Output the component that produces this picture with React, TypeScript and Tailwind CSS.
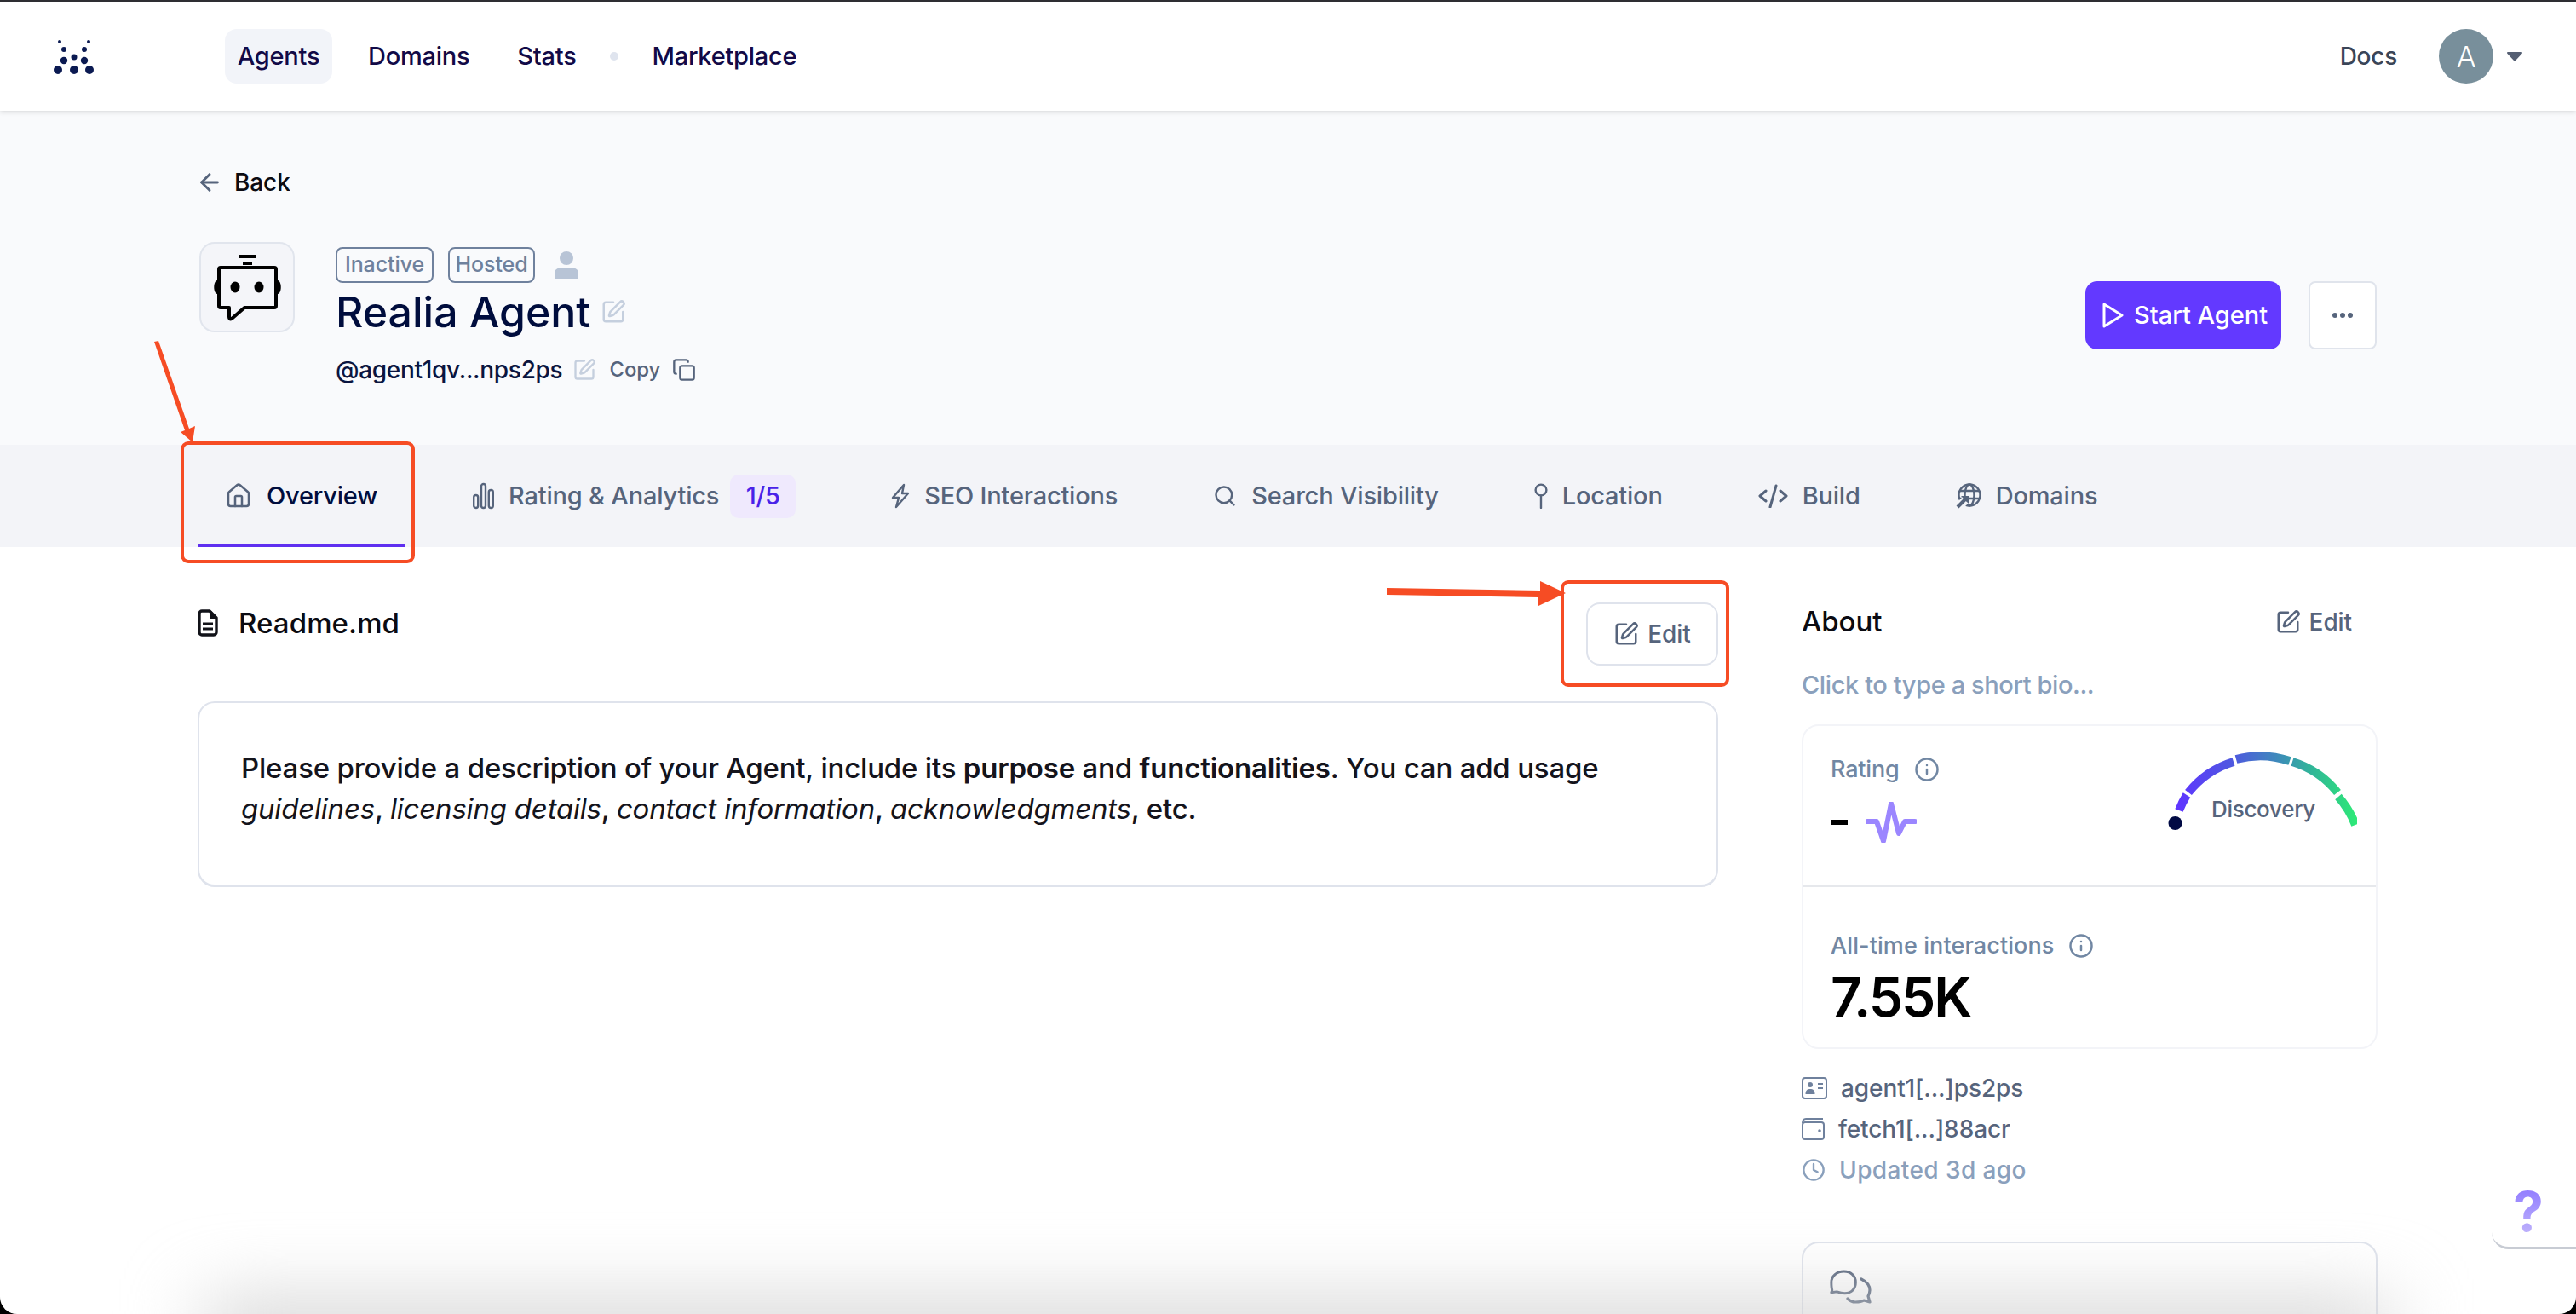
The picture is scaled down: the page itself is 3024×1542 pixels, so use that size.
import { Search, SquarePen, Copy, Info, Clock, ArrowLeft, House } from "lucide-react";

function Logo() {
  const dots = [
    [70, 48, 2], [104, 48, 2], [75, 57, 3], [99, 57, 3], [87, 66, 3.5],
    [75, 70, 4.2], [99, 70, 4.2], [68, 81, 5], [87, 81, 5], [105, 81, 5],
  ];
  return (
    <svg viewBox="60 42 54 46" className="w-[54px] h-[46px]" fill="#0b1a52">
      {dots.map(([x, y, r], i) => <circle key={i} cx={x} cy={y} r={r} />)}
    </svg>
  );
}

function Robot() {
  return (
    <svg viewBox="-3 0 90 80" className="w-[90px] h-[80px]" fill="none">
      <rect x="32" y="2" width="20" height="4" fill="#000" />
      <rect x="37" y="10" width="11" height="4" fill="#000" />
      <path d="M11 17h63a2 2 0 0 1 2 2v43a2 2 0 0 1-2 2H39L24 77c-2 1-3 0-3-2V64H11a2 2 0 0 1-2-2V19a2 2 0 0 1 2-2Z" stroke="#000" strokeWidth="4" strokeLinejoin="round" />
      <ellipse cx="28" cy="40" rx="5.5" ry="6.5" fill="#000" />
      <ellipse cx="56" cy="40" rx="5.5" ry="6.5" fill="#000" />
      <path d="M7 32c-5 1-5 15 0 16Z" fill="#000" />
      <path d="M78 32c5 1 5 15 0 16Z" fill="#000" />
    </svg>
  );
}

function Person() {
  return (
    <svg viewBox="0 0 28 32" className="w-[28px] h-[32px]" fill="#b8c4d6">
      <ellipse cx="14" cy="8" rx="8" ry="8" />
      <path d="M0 32v-6c0-5 4-7 8-7h12c4 0 8 2 8 7v6Z" />
    </svg>
  );
}

function Bars() {
  return (
    <svg viewBox="0 0 25 32" className="w-[25px] h-[32px]" fill="none" stroke="#56647c" strokeWidth="2.4">
      <rect x="1.2" y="15" width="5" height="15" rx="2.5" />
      <rect x="10" y="2" width="5" height="28" rx="2.5" />
      <rect x="18.8" y="9" width="5" height="21" rx="2.5" />
    </svg>
  );
}

function Bolt() {
  return (
    <svg viewBox="0 0 22 30" className="w-[22px] h-[30px]" fill="none" stroke="#56647c" strokeWidth="2.4" strokeLinejoin="round">
      <path d="M15 2 2 17h7L6 28l14-16h-7l2-10Z" />
    </svg>
  );
}

function Pin() {
  return (
    <svg viewBox="0 0 16 30" className="w-[16px] h-[30px]" fill="none" stroke="#56647c" strokeWidth="2.4" strokeLinecap="round">
      <circle cx="8" cy="8" r="6.4" />
      <path d="M8 14.4V29" />
    </svg>
  );
}

function BuildIcon() {
  return (
    <svg viewBox="0 0 35 28" className="w-[35px] h-[28px]" fill="none" stroke="#56647c" strokeWidth="3" strokeLinecap="round" strokeLinejoin="round">
      <path d="M9 8 2 14l7 6M26 8l7 6-7 6M21 2l-7 25" />
    </svg>
  );
}

function DomainIcon() {
  return (
    <svg viewBox="0 0 30 30" className="w-[30px] h-[30px]" fill="none" stroke="#56647c" strokeWidth="2.4">
      <circle cx="16" cy="14" r="12.5" />
      <ellipse cx="16" cy="14" rx="5.500" ry="12.5" />
      <path d="M4 9h24M4 18h24" />
      <path d="M2 29 11 20" stroke="#f3f4f8" strokeWidth="10" />
      <path d="M2 28 11 19" strokeWidth="4" />
      <path d="M6 15h10v10Z" fill="#56647c" stroke="none" />
    </svg>
  );
}

function ReadmeIcon() {
  return (
    <svg viewBox="0 0 24 32" className="w-[24px] h-[32px]" fill="none">
      <path d="M5 2h9l8 8v17a3 3 0 0 1-3 3H5a3 3 0 0 1-3-3V5a3 3 0 0 1 3-3Z" stroke="#111218" strokeWidth="3.4" strokeLinejoin="round" />
      <path d="M14 2h2l6 7v2h-8Z" fill="#111218" />
      <path d="M6 17h12M6 23h12" stroke="#111218" strokeWidth="3" />
    </svg>
  );
}

function PlayIcon() {
  return (
    <svg viewBox="0 0 26 30" className="w-[26px] h-[30px]" fill="none" stroke="#fff" strokeWidth="3" strokeLinejoin="round">
      <path d="M3 2v26l21-13Z" />
    </svg>
  );
}

function IdCard() {
  return (
    <svg viewBox="0 0 30 26" className="w-[30px] h-[26px]" fill="none">
      <rect x="1" y="1" width="28" height="24" rx="3" stroke="#6f819d" strokeWidth="2" />
      <circle cx="10" cy="9" r="3" fill="#6f819d" />
      <path d="M4.500 20c0-5 2.500-6 5.500-6s5.500 1 5.500 6Z" fill="#6f819d" />
      <path d="M19 8h6M19 13h6" stroke="#6f819d" strokeWidth="2" />
    </svg>
  );
}

function WalletIcon() {
  return (
    <svg viewBox="0 0 27 26" className="w-[27px] h-[26px]" fill="none" stroke="#6f819d" strokeWidth="2">
      <rect x="1" y="5" width="25" height="20" rx="3" />
      <path d="M1 6c0-3 1-5 4-5h20" />
      <circle cx="21" cy="15" r="0.8" fill="#6f819d" />
    </svg>
  );
}

function Chats() {
  return (
    <svg viewBox="0 0 50 40" className="w-[50px] h-[40px]" fill="none" stroke="#56647c" strokeWidth="3.2" strokeLinejoin="round" strokeLinecap="round">
      <path d="M3 25 2 28l7-1c3 1 6 2 10 2 9 0 14-6 14-14S27 1 18 1 2 7 2 15c0 4 0 7 1 10Z" transform="translate(0 1) scale(.92 .92)" />
      <path d="M37 11c6 3 10 7 10 13 0 3-1 5-2 7l2 7-7-2c-3 2-7 2-10 2-4 0-7-2-9-4" />
    </svg>
  );
}

function Gauge() {
  return (
    <div className="relative w-[222px] h-[96px]">
      <svg viewBox="0 0 222 96" className="w-[222px] h-[96px]" fill="none">
        <defs>
          <linearGradient id="g" gradientUnits="userSpaceOnUse" x1="13" y1="0" x2="220" y2="0">
            <stop offset="0" stopColor="#5f36ff" />
            <stop offset="0.3" stopColor="#4f58e0" />
            <stop offset="0.55" stopColor="#3e88bc" />
            <stop offset="0.75" stopColor="#30b598" />
            <stop offset="1" stopColor="#2ee878" />
          </linearGradient>
        </defs>
        <g stroke="url(#g)" strokeWidth="10">
          <path d="M13 71A108 108 0 0 1 22 53" />
          <path d="M24 50A108 108 0 0 1 77 14" />
          <path d="M80 11A108 108 0 0 1 143 13" />
          <path d="M146 14A108 108 0 0 1 199 50" />
          <path d="M200 55A108 108 0 0 1 220 88" />
        </g>
        <circle cx="8.500" cy="86" r="8" fill="#010a44" />
      </svg>
      <span className="absolute left-[51px] top-[57px] text-[26px] leading-[26px] tracking-[-0.3px] text-[#56647c]">Discovery</span>
    </div>
  );
}

function Pulse() {
  return (
    <svg viewBox="0 0 60 48" className="w-[60px] h-[48px]" fill="none" stroke="#9b86ff" strokeWidth="6" strokeLinecap="round" strokeLinejoin="round">
      <path d="M2 23h11l8 23 9-44 9 35 7-14h12" />
    </svg>
  );
}

function Tab({ icon, label, active, children }: { icon: React.ReactNode; label: string; active?: boolean; children?: React.ReactNode }) {
  return (
    <div className={`relative h-[120px] px-[32px] flex items-center gap-[17px] text-[29px] tracking-[-0.2px] whitespace-nowrap ${active ? "text-[#000d3d]" : "text-[#56647c]"}`}>
      {icon}
      <span>{label}</span>
      {children}
      {active && <div className="absolute left-0 right-0 bottom-0 h-[4px] bg-[#5f2ff0]" />}
    </div>
  );
}

function Annotations() {
  return (
    <svg viewBox="0 0 3024 1542" className="absolute left-0 top-0 w-[3024px] h-[1542px] pointer-events-none" fill="none">
      <rect x="214" y="520" width="271" height="139" rx="7" stroke="#f64c24" strokeWidth="4" />
      <rect x="1834" y="683" width="194" height="121" rx="7" stroke="#f64c24" strokeWidth="4" />
      <path d="M181 401 186 400 222 503 229 500 226 519 212 507 217 505Z" fill="#f64c24" />
      <path d="M1628 690 1808 693V682L1838 696 1806 711V701L1628 698Z" fill="#f64c24" />
    </svg>
  );
}

export default function App() {
  return (
    <div className="relative w-[3024px] h-[1542px] bg-black overflow-hidden font-['Inter',sans-serif] font-[450] tracking-[-0.1px]">
      <div className="relative h-full rounded-b-[20px] overflow-hidden bg-white flex flex-col">
        <header className="relative z-10 h-[130px] shrink-0 border-t-2 border-[#2e2e33] bg-white shadow-[0_2px_5px_rgba(0,0,0,0.12)] flex items-center pl-[60px] pr-[63px] text-[29px] tracking-[-0.25px] text-[#120a47]">
          <Logo />
          <nav className="ml-[150px] flex items-center">
            <div className="w-[126px] h-[64px] rounded-[14px] bg-[#f2f4f9] flex items-center justify-center">Agents</div>
            <span className="ml-[42px]">Domains</span>
            <span className="ml-[56px]">Stats</span>
            <span className="ml-[39px] w-[10px] h-[10px] rounded-full bg-[#dfe4ee]" />
            <span className="ml-[40px]">Marketplace</span>
          </nav>
          <div className="ml-auto flex items-center">
            <span className="text-[#3a4558] text-[28px]">Docs</span>
            <div className="ml-[49px] w-[64px] h-[64px] rounded-full bg-[#788f9b] text-white text-[34px] font-light flex items-center justify-center">A</div>
            <svg viewBox="0 0 18 11" className="ml-[16px] w-[18px] h-[11px]" fill="#555f73"><path d="M1 0h16a1 1 0 0 1 .7 1.700L10 10a1.500 1.500 0 0 1-2 0L.3 1.700A1 1 0 0 1 1 0Z" /></svg>
          </div>
        </header>

        <section className="h-[392px] shrink-0 bg-[#f9fafc] pl-[232px] pr-[234px] pt-[68px]">
          <div className="flex items-center gap-[12px] h-[32px] text-[28px] text-[#0b0b12]">
            <ArrowLeft className="-ml-[3px] w-[34px] h-[32px] text-[#56647c]" strokeWidth={2.2} />
            <span>Back</span>
          </div>
          <div className="mt-[54px] flex items-start justify-between">
            <div className="flex items-start">
              <div className="ml-[2px] w-[112px] h-[106px] rounded-[18px] border-2 border-[#e1e5ed] bg-[#f4f5f9] flex items-center justify-center">
                <Robot />
              </div>
              <div className="ml-[48px] pt-[6px]">
                <div className="flex items-center h-[42px]">
                  <span className="h-[42px] w-[115px] rounded-[8px] border-2 border-[#6f819d] text-[#6f819d] text-[25px] flex items-center justify-center">Inactive</span>
                  <span className="ml-[17px] h-[42px] w-[102px] rounded-[8px] border-2 border-[#6f819d] text-[#6f819d] text-[25px] flex items-center justify-center">Hosted</span>
                  <span className="ml-[23px]"><Person /></span>
                </div>
                <div className="mt-[6px] flex items-center h-[56px]">
                  <span className="text-[50px] leading-[56px] font-medium tracking-[0px] text-[#000d3d]">Realia Agent</span>
                  <SquarePen className="ml-[12px] w-[30px] h-[30px] text-[#c5cfde]" strokeWidth={2} />
                </div>
                <div className="mt-[24px] flex items-center h-[32px]">
                  <span className="text-[28px] tracking-[-0.3px] text-[#0a1540]">@agent1qv...nps2ps</span>
                  <SquarePen className="ml-[12px] w-[28px] h-[28px] text-[#c5cfde]" strokeWidth={2} />
                  <span className="ml-[15px] text-[24px] text-[#56647c]">Copy</span>
                  <Copy className="ml-[14px] w-[28px] h-[28px] text-[#56647c]" strokeWidth={2} />
                </div>
              </div>
            </div>
            <div className="mt-[46px] flex items-center">
              <div className="w-[230px] h-[80px] rounded-[14px] bg-[#6339ff] text-white text-[29px] tracking-[0px] flex items-center pl-[19px] gap-[12px]">
                <PlayIcon />
                <span>Start Agent</span>
              </div>
              <div className="ml-[32px] w-[80px] h-[80px] rounded-[8px] border-2 border-[#e0e4ec] bg-white flex items-center justify-center gap-[3px]">
                <span className="w-[6px] h-[6px] rounded-full bg-[#56647c]" />
                <span className="w-[6px] h-[6px] rounded-full bg-[#56647c]" />
                <span className="w-[6px] h-[6px] rounded-full bg-[#56647c]" />
              </div>
            </div>
          </div>
        </section>

        <div className="h-[120px] shrink-0 bg-[#f3f4f8] pl-[232px] flex gap-[48px]">
          <Tab active label="Overview" icon={<House className="w-[32px] h-[32px] text-[#56647c]" strokeWidth={1.9} />} />
          <Tab label="Rating & Analytics" icon={<Bars />}>
            <span className="-ml-[4px] w-[77px] h-[51px] rounded-[10px] bg-[#efe9fd] text-[#4a22e8] flex items-center justify-center">1/5</span>
          </Tab>
          <Tab label="SEO Interactions" icon={<Bolt />} />
          <Tab label="Search Visibility" icon={<Search className="w-[28px] h-[30px] text-[#56647c]" strokeWidth={2.1} />} />
          <Tab label="Location" icon={<Pin />} />
          <Tab label="Build" icon={<BuildIcon />} />
          <Tab label="Domains" icon={<DomainIcon />} />
        </div>

        <main className="flex-1 flex pl-[232px] pr-[233px] gap-[98px]">
          <div className="w-[1785px]">
            <div className="h-[181px] relative">
              <div className="absolute left-0 top-[71px] flex items-center gap-[24px] text-[33px] leading-[36px] tracking-[0.1px] text-[#0b0b12]">
                <ReadmeIcon />
                <span>Readme.md</span>
              </div>
              <div className="absolute right-0 top-[65px] w-[155px] h-[74px] rounded-[16px] border-2 border-[#dfe3ec] flex items-center justify-center gap-[10px] text-[28px] text-[#56647c]">
                <SquarePen className="w-[30px] h-[30px]" strokeWidth={2} />
                <span>Edit</span>
              </div>
            </div>
            <div className="h-[218px] rounded-[20px] border-2 border-[#dfe3ec] border-b-[3px] pl-[49px] pr-[40px] pt-[53px] text-[33px] leading-[47.5px] tracking-[-0.2px] text-[#14141c]">
              Please provide a description of your Agent, include its <b className="font-semibold">purpose</b> and <b className="font-semibold">functionalities</b>. You can add usage<br />
              <i>guidelines</i>, <i>licensing details</i>, <i>contact information</i>, <i>acknowledgments</i>, etc.
            </div>
          </div>

          <div className="w-[676px] pt-[43px]">
            <div className="h-[87px] flex items-center justify-between pt-[2px]">
              <span className="text-[33px] text-[#0b0b12]">About</span>
              <span className="mr-[30px] flex items-center gap-[10px] text-[28px] text-[#56647c]">
                <SquarePen className="w-[30px] h-[30px]" strokeWidth={2} />
                Edit
              </span>
            </div>
            <div className="mt-[16px] h-[32px] flex items-center text-[29px] tracking-[-0.4px] text-[#8aa0bc]">Click to type a short bio...</div>
            <div className="mt-[30px] h-[381px] rounded-[20px] border-2 border-[#f3f4f8]">
              <div className="h-[189px] border-b-2 border-[#e6e8ec] flex justify-between pl-[32px] pr-[22px] pt-[28px]">
                <div className="pt-[7px]">
                  <div className="flex items-center gap-[18px] h-[32px] text-[27px] tracking-[-0.2px] text-[#7187a3]">
                    Rating
                    <Info className="w-[30px] h-[30px]" strokeWidth={2} />
                  </div>
                  <div className="mt-[22px] flex items-center">
                    <span className="w-[20px] h-[6px] bg-black" />
                    <span className="ml-[21px]"><Pulse /></span>
                  </div>
                </div>
                <Gauge />
              </div>
              <div className="pl-[32px] pt-[53px]">
                <div className="flex items-center gap-[16px] h-[32px] text-[27px] tracking-[0.1px] text-[#7187a3]">
                  All-time interactions
                  <Info className="w-[30px] h-[30px]" strokeWidth={2} />
                </div>
                <div className="mt-[8px] text-[64px] leading-[72px] font-semibold tracking-[-2px] text-black">7.55K</div>
              </div>
            </div>
            <div className="mt-[30px] flex items-center gap-[16px] h-[32px] text-[28px] text-[#56647c]"><IdCard /><span>agent1[...]ps2ps</span></div>
            <div className="mt-[16px] flex items-center gap-[16px] h-[32px] text-[28px] text-[#56647c]"><WalletIcon /><span>fetch1[...]88acr</span></div>
            <div className="mt-[16px] flex items-center gap-[16px] h-[32px] text-[28px] tracking-[0.4px] text-[#8aa0bc]"><Clock className="w-[28px] h-[28px]" strokeWidth={2} /><span>Updated 3d ago</span></div>
            <div className="mt-[68px] h-[200px] rounded-[20px] border-2 border-[#dfe3ec] pl-[31px] pt-[31px]"><Chats /></div>
          </div>
        </main>

        <div className="absolute right-0 top-[1380px] w-[99px] h-[86px] rounded-bl-[20px] bg-white border-b-[3px] border-[#c8ccd4] flex items-center pl-[25px]">
          <span className="text-[64px] leading-[64px] font-bold bg-gradient-to-b from-[#8f78ff] to-[#c3b6fa] bg-clip-text text-transparent">?</span>
        </div>
        <div className="absolute left-[240px] right-[220px] top-[1530px] h-[70px] bg-[#cfcfcf] blur-[45px] pointer-events-none" />
      </div>
      <Annotations />
    </div>
  );
}
